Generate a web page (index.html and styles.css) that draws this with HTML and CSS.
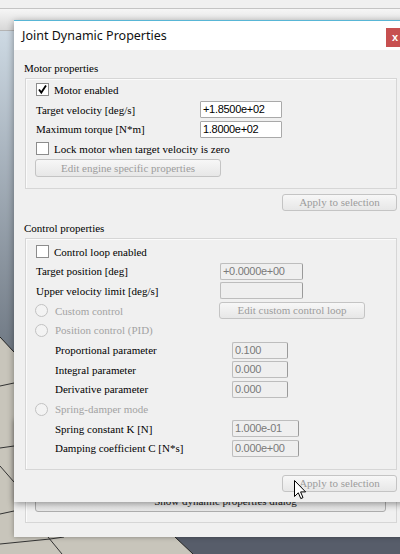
FILE: index.html
```html
<!DOCTYPE html>
<html>
<head>
<meta charset="utf-8">
<title>Joint Dynamic Properties</title>
<link rel="stylesheet" href="styles.css">
</head>
<body>
<div class="screen">
  <div class="toolbar"></div>
  <div class="viewport">
    <svg class="scene" width="400" height="523" viewBox="0 31 400 523">
      <defs>
        <linearGradient id="sky" x1="0" y1="0" x2="0" y2="1">
          <stop offset="0" stop-color="#cdd9e3"/>
          <stop offset="1" stop-color="#68717c"/>
        </linearGradient>
      </defs>
      <rect x="0" y="31" width="400" height="523" fill="#c8c5bb"/>
      <polygon points="0,31 400,31 400,380 14,352 0,337" fill="url(#sky)"/>
      <polyline points="0,337 14,352" fill="none" stroke="#222" stroke-width="1"/>
      <polyline points="0,386 14,383" fill="none" stroke="#333" stroke-width="1"/>
      <polyline points="0,448 14,446" fill="none" stroke="#333" stroke-width="1"/>
      <polyline points="0,466 14,482" fill="none" stroke="#333" stroke-width="1"/>
      <polyline points="0,514 14,511" fill="none" stroke="#333" stroke-width="1"/>
      <polyline points="0,544 50,539 64,537" fill="none" stroke="#333" stroke-width="1"/>
      <polyline points="48,537 62,554" fill="none" stroke="#333" stroke-width="1"/>
      <polygon points="175,537 400,537 400,554 193,554" fill="#575d6a"/>
      <polyline points="175,537 193,554" fill="none" stroke="#222" stroke-width="1"/>
    </svg>
  </div>

  <div class="win back-win">
    <div class="group back-group">
      <div class="btn show-btn">Show dynamic properties dialog</div>
    </div>
  </div>

  <div class="win dialog">
    <div class="titlebar">
      <span class="title">Joint Dynamic Properties</span>
      <span class="close">x</span>
    </div>
    <div class="dlg-body">
      <div class="sec-title">Motor properties</div>
      <div class="group motor-group">
        <div class="row">
          <span class="chk"><svg width="11" height="11" viewBox="0 0 11 11"><path d="M2 5.5 L4.3 8.6 L9 1.5" fill="none" stroke="#000" stroke-width="1.8"/></svg></span>
          <span>Motor enabled</span>
        </div>
        <div class="row">
          <span class="lbl lbl-motor">Target velocity [deg/s]</span>
          <span class="field w82">+1.8500e+02</span>
        </div>
        <div class="row">
          <span class="lbl lbl-motor">Maximum torque [N*m]</span>
          <span class="field w82">1.8000e+02</span>
        </div>
        <div class="row">
          <span class="chk"></span>
          <span>Lock motor when target velocity is zero</span>
        </div>
        <div class="btn dis engine-btn">Edit engine specific properties</div>
      </div>
      <div class="apply-row"><div class="btn dis apply-btn">Apply to selection</div></div>

      <div class="sec-title sec-gap">Control properties</div>
      <div class="group control-group">
        <div class="row">
          <span class="chk"></span>
          <span>Control loop enabled</span>
        </div>
        <div class="row">
          <span class="lbl lbl-ctrl">Target position [deg]</span>
          <span class="field dis w83">+0.0000e+00</span>
        </div>
        <div class="row">
          <span class="lbl lbl-ctrl">Upper velocity limit [deg/s]</span>
          <span class="field dis w83"></span>
        </div>
        <div class="row">
          <span class="lbl lbl-ctrl radio-lbl"><span class="radio"></span><span class="distext">Custom control</span></span>
          <div class="btn dis custom-btn">Edit custom control loop</div>
        </div>
        <div class="row">
          <span class="lbl lbl-ctrl radio-lbl"><span class="radio"></span><span class="distext">Position control (PID)</span></span>
        </div>
        <div class="row sub">
          <span class="lbl lbl-sub">Proportional parameter</span>
          <span class="field dis w56">0.100</span>
        </div>
        <div class="row sub">
          <span class="lbl lbl-sub">Integral parameter</span>
          <span class="field dis w56">0.000</span>
        </div>
        <div class="row sub">
          <span class="lbl lbl-sub">Derivative parameter</span>
          <span class="field dis w56">0.000</span>
        </div>
        <div class="row">
          <span class="lbl lbl-ctrl radio-lbl"><span class="radio"></span><span class="distext">Spring-damper mode</span></span>
        </div>
        <div class="row sub">
          <span class="lbl lbl-sub">Spring constant K [N]</span>
          <span class="field dis w67">1.000e-01</span>
        </div>
        <div class="row sub">
          <span class="lbl lbl-sub">Damping coefficient C [N*s]</span>
          <span class="field dis w67">0.000e+00</span>
        </div>
      </div>
      <div class="apply-row"><div class="btn dis apply-btn">Apply to selection</div></div>
    </div>
  </div>

  <svg class="cursor" width="13" height="20" viewBox="0 0 13 20">
    <path d="M0.5 0.5 L0.5 16.5 L4.3 12.8 L6.8 18.6 L9 17.6 L6.6 11.9 L11.6 11.9 Z" fill="#fff" stroke="#000" stroke-width="1" stroke-linejoin="miter"/>
  </svg>
</div>
</body>
</html>
```

FILE: styles.css
```css
* { box-sizing: border-box; }
html, body { margin: 0; padding: 0; }
body {
  width: 400px;
  height: 554px;
  overflow: hidden;
  font-family: "Liberation Serif", "Times New Roman", serif;
  font-size: 11px;
  color: #000;
  background: #c8c5bb;
}
.screen {
  position: relative;
  width: 400px;
  height: 554px;
  display: flex;
  flex-direction: column;
  overflow: hidden;
}
.toolbar {
  flex: none;
  height: 31px;
  background: linear-gradient(#f0f0f0 0 8px, #c4c4c4 8px 9px, #f6f6f6 9px, #d8d8d8 30px, #b4b4b4 30px 31px);
}
.viewport { flex: 1; }
.scene { display: block; }

.win { position: absolute; background: #f0f0f0; }

.back-win {
  left: 14px;
  top: 420px;
  width: 406px;
  height: 117px;
  display: flex;
  flex-direction: column;
  justify-content: flex-end;
  padding: 0 23px 14px 11px;
  box-shadow: 0 0 5px rgba(0,0,0,0.35);
}
.back-group { padding: 0 10px 10px 9px; }
.show-btn {
  height: 21px;
  line-height: 19px;
  color: #1a1a1a;
  padding-left: 30px;
}

.dialog {
  left: 14px;
  top: 20px;
  width: 406px;
  height: 482px;
  border-top: 1px solid #58b6d6;
  box-shadow: 0 2px 7px rgba(0,0,0,0.4);
}
.titlebar {
  height: 29px;
  background: #fff;
  display: flex;
  align-items: flex-start;
}
.title {
  font-family: "Noto Sans", "Open Sans", sans-serif;
  font-size: 12.5px;
  line-height: 29px;
  padding-left: 8px;
  color: #111;
}
.close {
  margin-left: auto;
  margin-top: 7px;
  width: 34px;
  height: 19px;
  background: #c75050;
  color: #fff;
  font-family: "Liberation Sans", sans-serif;
  font-weight: bold;
  font-size: 11px;
  line-height: 18px;
  padding-left: 6px;
}

.dlg-body { padding: 9px 23px 0 10px; }
.sec-title { height: 19px; line-height: 18px; }
.sec-gap { margin-top: 8px; }

.group {
  border: 1px solid #d6d6d6;
  box-shadow: inset 1px 1px 0 #fbfbfb;
}
.dlg-body .group { margin-left: 1px; }
.motor-group { padding: 1px 10px 11px 10px; }
.control-group { padding: 3px 10px 11px 10px; }

.row {
  height: 19.7px;
  display: flex;
  align-items: center;
  white-space: nowrap;
}
.row.sub { padding-left: 19px; }
.lbl { flex: none; display: flex; align-items: center; }
.lbl-motor { width: 164px; }
.lbl-ctrl { width: 184px; }
.lbl-sub { width: 177px; }

.chk {
  flex: none;
  width: 13px;
  height: 13px;
  border: 1px solid #8c8c8c;
  background: #fff;
  margin-right: 5px;
  display: flex;
  align-items: center;
  justify-content: center;
}
.radio-lbl { margin-left: -1px; }
.radio {
  flex: none;
  width: 13px;
  height: 13px;
  border-radius: 50%;
  border: 1px solid #c2c2c2;
  background: #f3f3f3;
  margin-right: 7px;
}
.distext { color: #a3a3a3; }

.field {
  flex: none;
  height: 17px;
  border: 1px solid #a9a9a9;
  border-radius: 1px;
  background: #fff;
  font-family: "Liberation Sans", Arial, sans-serif;
  font-size: 11px;
  letter-spacing: -0.3px;
  line-height: 15px;
  padding-left: 2px;
  color: #000;
}
.field.dis {
  background: #efefef;
  border-color: #bdbdbd;
  border-right-color: #9a9a9a;
  border-radius: 2px;
  color: #7a7a7a;
}
.w82 { width: 82px; }
.w83 { width: 83px; }
.w56 { width: 56px; }
.w67 { width: 67px; }

.btn {
  border: 1px solid #adadad;
  border-radius: 3px;
  background: linear-gradient(#f7f7f7, #e7e7e7);
  text-align: center;
  white-space: nowrap;
}
.btn.dis { color: #9c9c9c; border-color: #c4c4c4; }
.engine-btn {
  width: 186px;
  height: 18px;
  line-height: 16px;
  margin-left: -1px;
}
.custom-btn {
  width: 146px;
  height: 17px;
  line-height: 15px;
}
.apply-row {
  display: flex;
  justify-content: flex-end;
  margin-top: 5px;
}
.apply-btn {
  width: 115px;
  height: 17px;
  line-height: 15px;
}

.cursor {
  position: absolute;
  left: 294px;
  top: 480px;
}
```
